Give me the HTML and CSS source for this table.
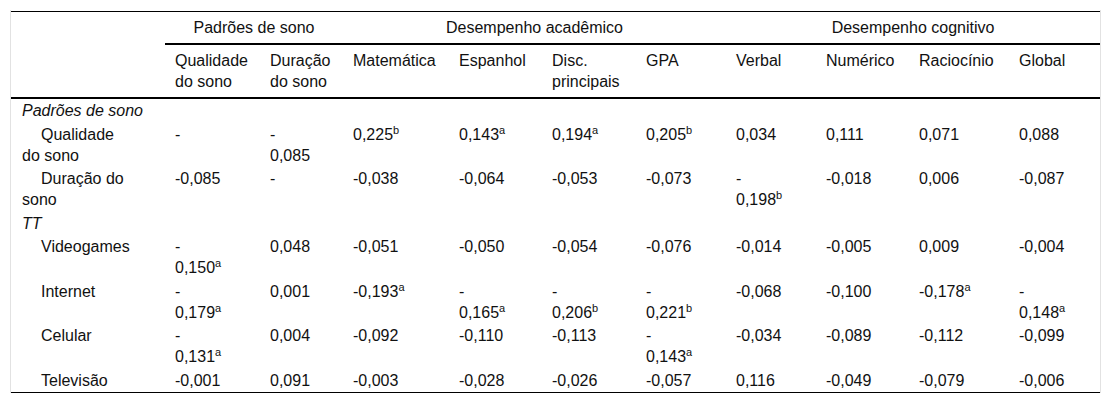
FILE: index.html
```html
<!DOCTYPE html>
<html lang="pt">
<head>
<meta charset="utf-8">
<title>Tabela de correlações</title>
<link rel="stylesheet" href="styles.css">
</head>
<body>
<div class="wrap">
<table class="tbl">
<colgroup>
<col class="c-label">
<col class="c-qs"><col class="c-ds">
<col class="c-mat"><col class="c-esp"><col class="c-disc"><col class="c-gpa">
<col class="c-ver"><col class="c-num"><col class="c-rac"><col class="c-glo">
</colgroup>
<thead>
<tr class="grp">
<th class="blank" rowspan="2"></th>
<th colspan="2">Padrões de sono</th>
<th colspan="4">Desempenho acadêmico</th>
<th colspan="4">Desempenho cognitivo</th>
</tr>
<tr class="sub">
<th>Qualidade<br>do sono</th>
<th>Duração<br>do sono</th>
<th>Matemática</th>
<th>Espanhol</th>
<th>Disc.<br>principais</th>
<th>GPA</th>
<th>Verbal</th>
<th>Numérico</th>
<th>Raciocínio</th>
<th>Global</th>
</tr>
</thead>
<tbody>
<tr class="sec"><td colspan="11">Padrões de sono</td></tr>
<tr>
<td class="lbl">Qualidade<br>do sono</td>
<td>-</td><td>-<br>0,085</td><td>0,225<sup>b</sup></td><td>0,143<sup>a</sup></td><td>0,194<sup>a</sup></td><td>0,205<sup>b</sup></td><td>0,034</td><td>0,111</td><td>0,071</td><td>0,088</td>
</tr>
<tr>
<td class="lbl">Duração do<br>sono</td>
<td>-0,085</td><td>-</td><td>-0,038</td><td>-0,064</td><td>-0,053</td><td>-0,073</td><td>-<br>0,198<sup>b</sup></td><td>-0,018</td><td>0,006</td><td>-0,087</td>
</tr>
<tr class="sec"><td colspan="11">TT</td></tr>
<tr>
<td class="lbl">Videogames</td>
<td>-<br>0,150<sup>a</sup></td><td>0,048</td><td>-0,051</td><td>-0,050</td><td>-0,054</td><td>-0,076</td><td>-0,014</td><td>-0,005</td><td>0,009</td><td>-0,004</td>
</tr>
<tr>
<td class="lbl">Internet</td>
<td>-<br>0,179<sup>a</sup></td><td>0,001</td><td>-0,193<sup>a</sup></td><td>-<br>0,165<sup>a</sup></td><td>-<br>0,206<sup>b</sup></td><td>-<br>0,221<sup>b</sup></td><td>-0,068</td><td>-0,100</td><td>-0,178<sup>a</sup></td><td>-<br>0,148<sup>a</sup></td>
</tr>
<tr>
<td class="lbl">Celular</td>
<td>-<br>0,131<sup>a</sup></td><td>0,004</td><td>-0,092</td><td>-0,110</td><td>-0,113</td><td>-<br>0,143<sup>a</sup></td><td>-0,034</td><td>-0,089</td><td>-0,112</td><td>-0,099</td>
</tr>
<tr>
<td class="lbl">Televisão</td>
<td>-0,001</td><td>0,091</td><td>-0,003</td><td>-0,028</td><td>-0,026</td><td>-0,057</td><td>0,116</td><td>-0,049</td><td>-0,079</td><td>-0,006</td>
</tr>
</tbody>
</table>
</div>
</body>
</html>
```

FILE: styles.css
```css
html, body {
  margin: 0;
  padding: 0;
  background: #fff;
}

body {
  font-family: "Liberation Sans", Arial, sans-serif;
  font-size: 16px;
  color: #111;
}

.wrap {
  margin: 10px 0 0 10px;
  padding-top: 1px;
  width: 1089px;
  border-left: 1px solid #e2e2e2;
  border-right: 1px solid #e2e2e2;
}

.tbl {
  width: 1089px;
  table-layout: fixed;
  border-collapse: separate;
  border-spacing: 0;
  border-top: 1px solid #000;
  border-bottom: 1px solid #000;
  line-height: 21px;
}

.c-label { width: 154px; }
.c-qs { width: 95px; }
.c-ds { width: 83px; }
.c-mat { width: 106px; }
.c-esp { width: 93px; }
.c-disc { width: 94px; }
.c-gpa { width: 90px; }
.c-ver { width: 90px; }
.c-num { width: 93px; }
.c-rac { width: 100px; }
.c-glo { width: 91px; }

.tbl th {
  font-weight: normal;
  text-align: left;
  vertical-align: top;
  padding: 5px 10px;
}

.tbl .grp th {
  text-align: center;
  border-bottom: 2px solid #000;
}

.tbl .grp th.blank {
  border-bottom: 2px solid #000;
}

.tbl .sub th {
  border-bottom: 2px solid #000;
}

.tbl td {
  vertical-align: top;
  text-align: left;
  padding: 1px 10px 1.5px 10px;
  white-space: nowrap;
}

.tbl td.lbl {
  padding-left: 11px;
  text-indent: 19px;
}

.tbl .sec td {
  font-style: italic;
  padding-left: 11px;
}

.tbl sup {
  font-size: 11px;
  line-height: 0;
  vertical-align: 6px;
}
```
